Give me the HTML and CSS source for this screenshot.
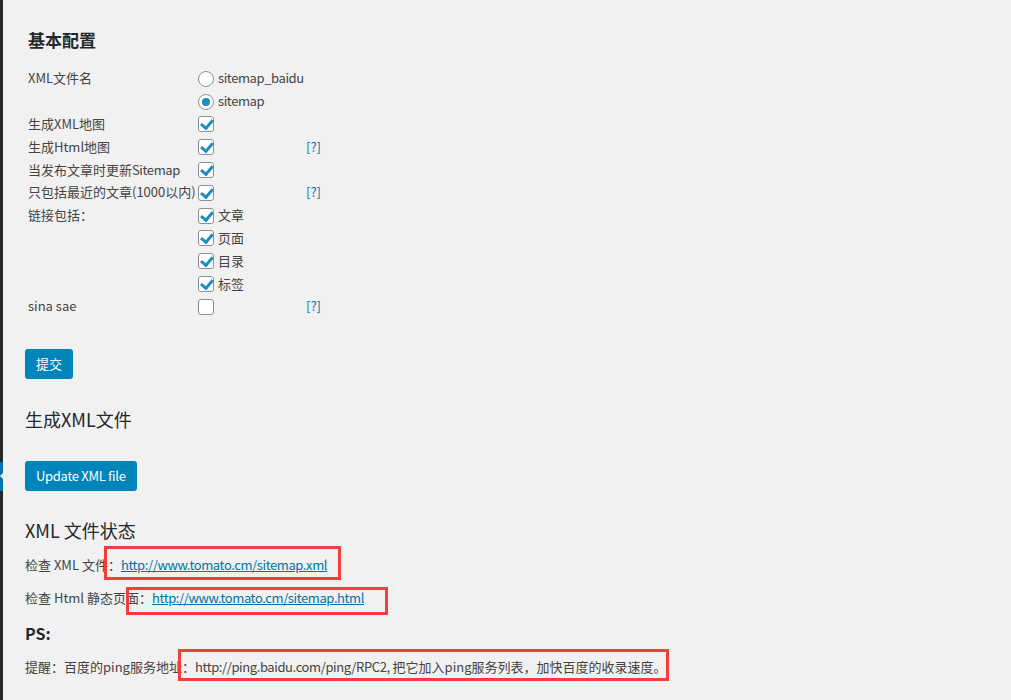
FILE: index.html
```html
<!DOCTYPE html>
<html lang="zh-CN">
<head>
    <meta charset="UTF-8">
    <title>Sitemap 设置</title>
    <link rel="stylesheet" href="styles.css">
</head>
<body>
    <div class="adminmenu">
        <div class="menu-current"></div>
    </div>

    <div class="wrap">
        <form class="settings">
            <h3>基本配置</h3>
            <table class="form-table">
                <tr>
                    <td class="label">XML文件名</td>
                    <td><span class="rd"><svg width="16" height="16" viewBox="0 0 16 16"><circle cx="8" cy="8" r="7.5" fill="#fff" stroke="#8c8f94"/></svg></span><span class="en">sitemap_baidu</span></td>
                    <td></td>
                </tr>
                <tr>
                    <td class="label"></td>
                    <td><span class="rd"><svg width="16" height="16" viewBox="0 0 16 16"><circle cx="8" cy="8" r="7.5" fill="#fff" stroke="#8c8f94"/><circle cx="8" cy="8" r="4" fill="#1e8cbe"/></svg></span><span class="en">sitemap</span></td>
                    <td></td>
                </tr>
                <tr>
                    <td class="label">生成XML地图</td>
                    <td><span class="cb on"></span></td>
                    <td></td>
                </tr>
                <tr>
                    <td class="label">生成Html地图</td>
                    <td><span class="cb on"></span></td>
                    <td><a class="help">[?]</a></td>
                </tr>
                <tr>
                    <td class="label">当发布文章时更新<span class="en">Sitemap</span></td>
                    <td><span class="cb on"></span></td>
                    <td></td>
                </tr>
                <tr>
                    <td class="label">只包括最近的文章(1000以内)</td>
                    <td><span class="cb on"></span></td>
                    <td><a class="help">[?]</a></td>
                </tr>
                <tr>
                    <td class="label">链接包括<span class="punct">：</span></td>
                    <td><span class="cb on"></span>文章</td>
                    <td></td>
                </tr>
                <tr>
                    <td class="label"></td>
                    <td><span class="cb on"></span>页面</td>
                    <td></td>
                </tr>
                <tr>
                    <td class="label"></td>
                    <td><span class="cb on"></span>目录</td>
                    <td></td>
                </tr>
                <tr>
                    <td class="label"></td>
                    <td><span class="cb on"></span>标签</td>
                    <td></td>
                </tr>
                <tr>
                    <td class="label">sina sae</td>
                    <td><span class="cb"></span></td>
                    <td><a class="help">[?]</a></td>
                </tr>
            </table>
        </form>

        <button class="button-primary submit">提交</button>

        <h2 class="first">生成XML文件</h2>
        <button class="button-primary update">Update XML file</button>

        <h2 class="status">XML 文件状态</h2>
        <p class="check-xml">检查 XML 文件<span class="punct">：</span><a href="#">http://www.tomato.cm/sitemap.xml</a></p>
        <p class="check-html">检查 Html 静态页面<span class="punct">：</span><a href="#">http://www.tomato.cm/sitemap.html</a></p>
        <h4>PS:</h4>
        <p class="tip">提醒<span class="punct">：</span>百度的ping服务地址<span class="punct">：</span><span class="en">http://ping.baidu.com/ping/RPC2,</span> 把它加入ping服务列表<span class="punct">，</span>加快百度的收录速度。</p>
    </div>

    <!-- annotation boxes drawn over the screenshot -->
    <div class="mark mark-1"></div>
    <div class="mark mark-2"></div>
    <div class="mark mark-3"></div>
</body>
</html>
```

FILE: styles.css
```css
body {
    margin: 0;
    padding: 0;
    background-color: #f1f1f1;
    color: #444;
    font-family: "Noto Sans CJK SC", sans-serif;
    font-size: 13px;
    display: flex;
    min-height: 700px;
    overflow: hidden;
}
.en, a {
    letter-spacing: -0.4px;
}
.punct {
    font-family: "Noto Sans CJK TC", sans-serif;
}
.adminmenu {
    width: 3px;
    flex-shrink: 0;
    background-color: #23282d;
    padding-top: 462px;
}
.menu-current {
    position: relative;
    height: 29px;
    background-color: #0073aa;
}
.menu-current::after {
    content: "";
    position: absolute;
    left: -7px;
    top: 7px;
    border: 7px solid transparent;
    border-right-color: #f1f1f1;
}
.wrap {
    padding: 28px 0 0 22px;
    flex: 1;
}
.settings {
    margin-left: 3px;
}
h3 {
    margin: 0;
    font-size: 17px;
    line-height: 24px;
    font-weight: 700;
    color: #23282d;
}
.form-table {
    margin-top: 15px;
    border-collapse: collapse;
}
.form-table td {
    padding: 0;
    height: 22.8px;
    line-height: 18px;
    vertical-align: middle;
    white-space: nowrap;
}
.form-table td.label {
    width: 170px;
}
.form-table td:nth-child(2) {
    width: 108px;
}
.rd, .cb {
    display: inline-block;
    width: 16px;
    height: 16px;
    vertical-align: middle;
    margin: -2px 4px 0 0;
}
.rd svg {
    display: block;
}
.cb {
    box-sizing: border-box;
    border: 1px solid #8c8f94;
    border-radius: 3px;
    background: #fff;
    position: relative;
}
.cb.on::after {
    content: "";
    position: absolute;
    left: 4px;
    top: 0;
    width: 4.5px;
    height: 9px;
    border: solid #1e8cbe;
    border-width: 0 3px 3px 0;
    transform: rotate(40deg);
}
a {
    color: #0073aa;
}
a.help {
    text-decoration: none;
    letter-spacing: 0;
}
.button-primary {
    display: block;
    height: 30px;
    padding: 0 11px;
    border: none;
    border-radius: 3px;
    background-color: #0085ba;
    color: #fff;
    font-family: inherit;
    font-size: 13px;
    cursor: pointer;
}
.submit {
    margin-top: 31px;
}
h2 {
    margin: 0;
    font-size: 18px;
    line-height: 24px;
    font-weight: 400;
    color: #23282d;
}
h2.first {
    margin-top: 28px;
}
.update {
    margin-top: 30px;
    letter-spacing: -0.3px;
}
h2.status {
    margin-top: 27px;
}
p {
    margin: 0;
    line-height: 20px;
}
.check-xml {
    margin-top: 13px;
}
.check-html {
    margin-top: 13px;
}
h4 {
    margin: 15px 0 0;
    font-size: 16px;
    line-height: 20px;
    font-weight: 700;
    color: #23282d;
}
.tip {
    margin-top: 14px;
}
.mark {
    position: absolute;
    box-sizing: border-box;
    border: 3px solid #f63c3c;
}
.mark-1 {
    left: 104px;
    top: 546px;
    width: 237px;
    height: 34px;
}
.mark-2 {
    left: 126px;
    top: 587px;
    width: 262px;
    height: 28px;
}
.mark-3 {
    left: 178px;
    top: 649px;
    width: 491px;
    height: 32px;
}
```
